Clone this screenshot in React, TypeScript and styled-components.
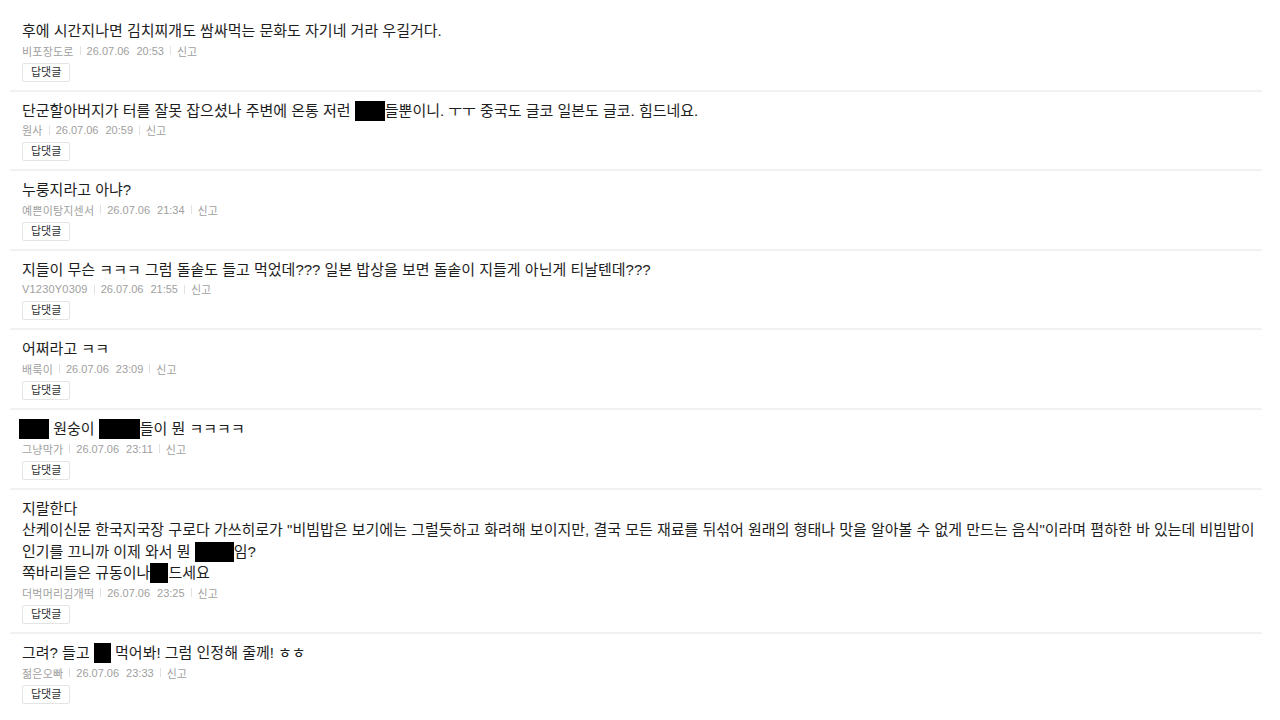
import React, { ReactNode } from "react";
import styled, { createGlobalStyle } from "styled-components";

const GlobalStyle = createGlobalStyle`
  html, body {
    margin: 0;
    padding: 0;
    background: #fff;
  }
  body {
    font-family: "Liberation Sans", "Noto Sans CJK KR", sans-serif;
    color: #222;
  }
`;

const CommentList = styled.ul`
  list-style: none;
  margin: 0;
  padding: 12px 18px 0 10px;
`;

const CommentItem = styled.li`
  padding: 8px 0 8px 12px;
  border-bottom: 2px solid #f1f1f1;

  &:last-child {
    border-bottom: none;
  }
`;

const CommentBody = styled.div`
  font-size: 15px;
  line-height: 21.6px;
  color: #1e1e1e;
  white-space: pre-line;
  word-break: keep-all;
`;

// black block covering a filtered word
const Redacted = styled.span<{ w: number; shift?: number }>`
  display: inline-block;
  width: ${(p) => p.w}px;
  height: 20px;
  margin-left: ${(p) => p.shift || 0}px;
  background: #000;
  vertical-align: -5px;
`;

const Meta = styled.div`
  display: flex;
  align-items: center;
  height: 18px;
  font-size: 11px;
  color: #a0a0a0;
`;

const Nick = styled.span`
  letter-spacing: 0.2px;
`;

const Sep = styled.span`
  width: 1px;
  height: 9px;
  margin: 0 6px;
  background: #e2e2e2;
`;

const Stamp = styled.span`
  & + & {
    margin-left: 7px;
  }
`;

const ReportLink = styled.a`
  color: #a0a0a0;
  text-decoration: none;
`;

const ReplyButton = styled.button`
  display: block;
  margin-top: 3px;
  height: 19px;
  padding: 0 8px;
  border: 1px solid #e4e4e4;
  border-radius: 2px;
  background: #fff;
  font-family: "Liberation Sans", "Noto Sans CJK KR", sans-serif;
  font-size: 11px;
  line-height: 17px;
  color: #333;
`;

type Comment = {
  nick: string;
  date: string;
  time: string;
  body: ReactNode;
};

const comments: Comment[] = [
  {
    nick: "비포장도로",
    date: "26.07.06",
    time: "20:53",
    body: "후에 시간지나면 김치찌개도 쌈싸먹는 문화도 자기네 거라 우길거다.",
  },
  {
    nick: "원사",
    date: "26.07.06",
    time: "20:59",
    body: (
      <>
        단군할아버지가 터를 잘못 잡으셨나 주변에 온통 저런 <Redacted w={30} />
        들뿐이니. ㅜㅜ 중국도 글코 일본도 글코. 힘드네요.
      </>
    ),
  },
  {
    nick: "예쁜이탕지센서",
    date: "26.07.06",
    time: "21:34",
    body: "누룽지라고 아냐?",
  },
  {
    nick: "V1230Y0309",
    date: "26.07.06",
    time: "21:55",
    body: "지들이 무슨 ㅋㅋㅋ 그럼 돌솥도 들고 먹었데??? 일본 밥상을 보면 돌솥이 지들게 아닌게 티날텐데???",
  },
  {
    nick: "배룩이",
    date: "26.07.06",
    time: "23:09",
    body: "어쩌라고 ㅋㅋ",
  },
  {
    nick: "그냥막가",
    date: "26.07.06",
    time: "23:11",
    body: (
      <>
        <Redacted w={30} shift={-3} /> 원숭이 <Redacted w={41} />
        들이 뭔 ㅋㅋㅋㅋ
      </>
    ),
  },
  {
    nick: "더벅머리김개떡",
    date: "26.07.06",
    time: "23:25",
    body: (
      <>
        {"지랄한다\n"}
        {
          '산케이신문 한국지국장 구로다 가쓰히로가 "비빔밥은 보기에는 그럴듯하고 화려해 보이지만, 결국 모든 재료를 뒤섞어 원래의 형태나 맛을 알아볼 수 없게 만드는 음식"이라며 폄하한 바 있는데 비빔밥이 인기를 끄니까 이제 와서 뭔 '
        }
        <Redacted w={39} />
        {"임?\n쪽바리들은 규동이나"}
        <Redacted w={18} />
        드세요
      </>
    ),
  },
  {
    nick: "젊은오빠",
    date: "26.07.06",
    time: "23:33",
    body: (
      <>
        그려? 들고 <Redacted w={17} /> 먹어봐! 그럼 인정해 줄께! ㅎㅎ
      </>
    ),
  },
];

const CommentRow = ({ nick, date, time, body }: Comment) => (
  <CommentItem>
    <CommentBody>{body}</CommentBody>
    <Meta>
      <Nick>{nick}</Nick>
      <Sep />
      <Stamp>{date}</Stamp>
      <Stamp>{time}</Stamp>
      <Sep />
      <ReportLink href="#">신고</ReportLink>
    </Meta>
    <ReplyButton type="button">답댓글</ReplyButton>
  </CommentItem>
);

const App = () => {
  return (
    <>
      <GlobalStyle />
      <CommentList>
        {comments.map((c) => (
          <CommentRow key={c.nick + c.time} {...c} />
        ))}
      </CommentList>
    </>
  );
};

export default App;
